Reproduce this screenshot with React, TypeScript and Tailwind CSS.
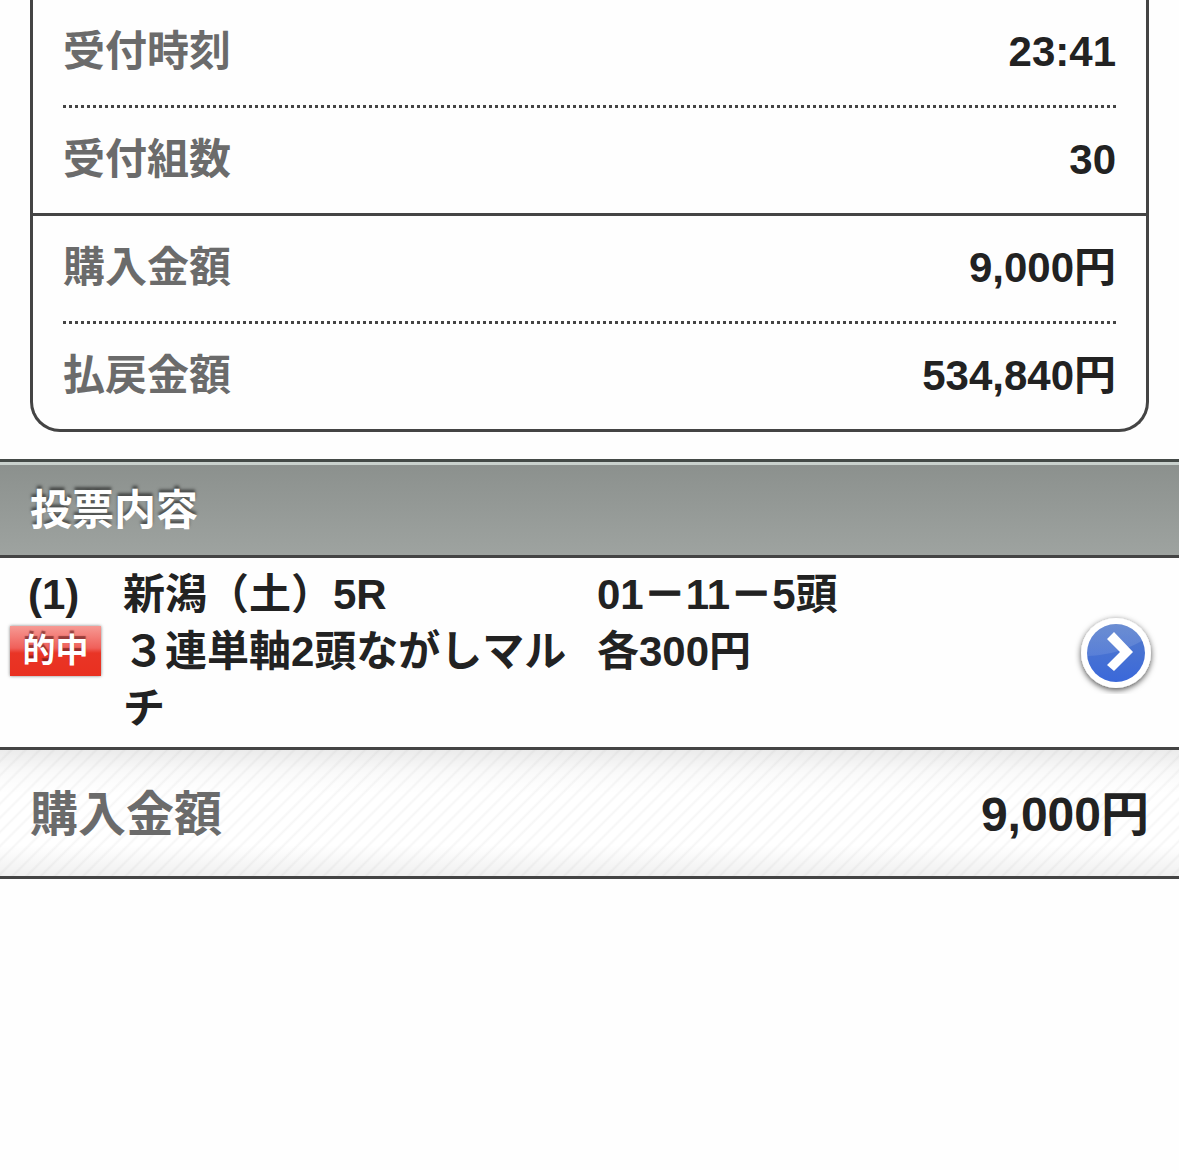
import { useId } from 'react';

interface SummaryItem {
  label: string;
  value: string;
  divider: string;
}

const summary: SummaryItem[] = [
  { label: '受付時刻', value: '23:41', divider: 'dotted' },
  { label: '受付組数', value: '30', divider: 'solid' },
  { label: '購入金額', value: '9,000円', divider: 'dotted' },
  { label: '払戻金額', value: '534,840円', divider: 'none' },
];

function SummaryRow({ label, value, divider }: SummaryItem) {
  return (
    <div className={divider === 'solid' ? 'border-b-3 border-[#444]' : ''}>
      <div
        className={
          divider === 'dotted'
            ? 'mx-[30px] flex justify-between border-b-3 border-dotted border-[#444] pt-[23px] pb-[25px]'
            : 'mx-[30px] flex justify-between pt-[23px] pb-[25px]'
        }
      >
        <dt className="text-[#6b6b6b]">{label}</dt>
        <dd>{value}</dd>
      </div>
    </div>
  );
}

function ArrowIcon() {
  const id = useId();

  return (
    <svg viewBox="0 0 84 84" className="size-[84px]" aria-hidden="true">
      <defs>
        <linearGradient id={`${id}base`} x1="0" y1="0" x2="0" y2="1">
          <stop offset="0" stopColor="#557ccb" />
          <stop offset="1" stopColor="#3a68da" />
        </linearGradient>
        <linearGradient id={`${id}gloss`} x1="0" y1="0" x2="0" y2="1">
          <stop offset="0" stopColor="#fff" stopOpacity="0.14" />
          <stop offset="1" stopColor="#fff" stopOpacity="0.1" />
        </linearGradient>
        <clipPath id={`${id}clip`}>
          <circle cx="42" cy="43" r="29" />
        </clipPath>
        <filter id={`${id}shadow`} x="-20%" y="-20%" width="140%" height="140%">
          <feDropShadow dx="0" dy="2" stdDeviation="3" floodColor="#000" floodOpacity="0.7" />
        </filter>
      </defs>
      <circle cx="42" cy="43" r="35" fill="#fff" filter={`url(#${id}shadow)`} />
      <circle cx="42" cy="43" r="29" fill={`url(#${id}base)`} />
      <path
        d="M10 10 H74 V26 C62 37 36 46 10 46 Z"
        fill={`url(#${id}gloss)`}
        clipPath={`url(#${id}clip)`}
      />
      <path d="M40 21 L59 41 L40 60 L33 54 L46 41 L33 28 Z" transform="translate(0 1)" fill="#fff" />
    </svg>
  );
}

export default function App() {
  return (
    <main
      lang="ja"
      className="min-h-screen bg-[#fefefe] font-['Liberation_Sans','Noto_Sans_CJK_JP',sans-serif] text-[42px] leading-[57px] font-bold text-[#222]"
    >
      <dl className="mx-[30px] mb-[27px] rounded-b-[30px] border-3 border-t-0 border-[#444]">
        {summary.map((item) => (
          <SummaryRow key={item.label} {...item} />
        ))}
      </dl>

      <h2 className="border-y-3 border-t-[#444a47] border-b-[#444] bg-linear-to-b from-[#8b908d] to-[#9ea3a0] px-[30px] pt-5 pb-4 text-white shadow-[inset_0_3px_0_#c9d1cd] [text-shadow:0_-3px_3px_rgba(0,0,0,0.5)]">
        投票内容
      </h2>

      <section className="flex border-b-3 border-[#444] pt-2 pb-[10px]">
        <div className="w-[123px] shrink-0">
          <p className="pl-7">(1)</p>
          <p className="mt-[3px] ml-[10px] h-[50px] w-[91px] bg-[linear-gradient(#f69a94,#f0605a_44%,#e93526_54%,#e93020)] text-center text-[33px] leading-[50px] text-white shadow-[0_0_3px_rgba(0,0,0,0.5)] [text-shadow:0_-3px_1px_rgba(90,20,20,0.6)]">
            的中
          </p>
        </div>
        <div className="w-[474px] shrink-0">
          <p>新潟（土）5R</p>
          <p>３連単軸2頭ながしマルチ</p>
        </div>
        <div className="flex-1">
          <p>
            01<span className="[-webkit-text-stroke:1px_#222]">－</span>11
            <span className="[-webkit-text-stroke:1px_#222]">－</span>5頭
          </p>
          <p>各300円</p>
        </div>
        <button type="button" aria-label="詳細" className="mr-[21px] self-center">
          <ArrowIcon />
        </button>
      </section>

      <section className="flex justify-between border-b-3 border-[#444] bg-[linear-gradient(rgba(0,0,0,0.08),rgba(0,0,0,0.02)_18%,transparent_35%,transparent_75%,rgba(0,0,0,0.06)),repeating-linear-gradient(135deg,#fff_0px,#fff_6px,#f6f6f6_8px,#fff_10px)] px-[30px] pt-[35px] pb-[31px] text-5xl leading-[60px]">
        <h3 className="text-[#6b6b6b]">購入金額</h3>
        <p>9,000円</p>
      </section>
    </main>
  );
}
